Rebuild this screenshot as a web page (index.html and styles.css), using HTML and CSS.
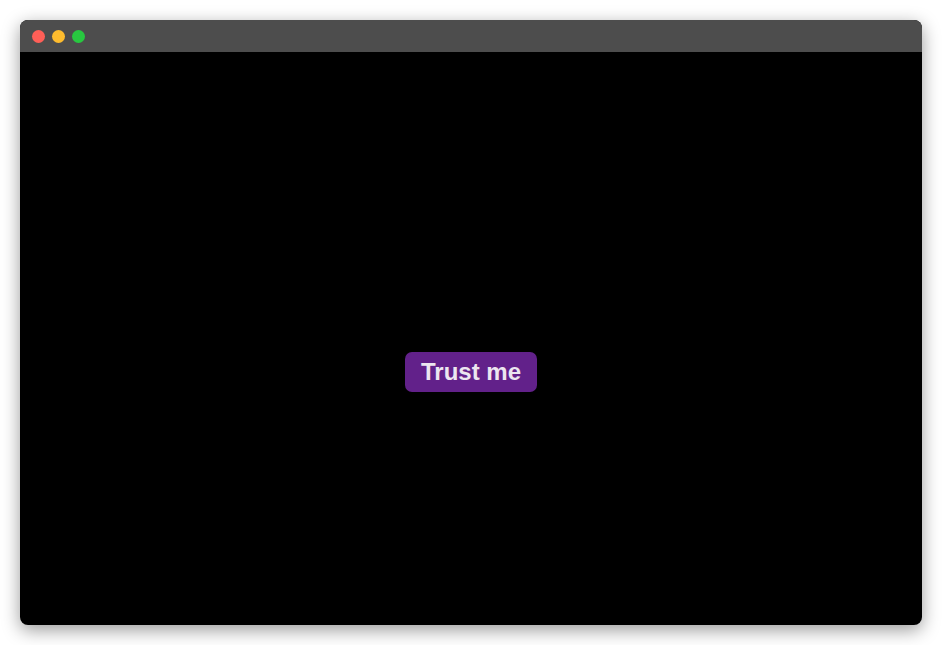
FILE: index.html
```html
<!DOCTYPE html>
<html>
<head>
<meta charset="utf-8">
<link rel="stylesheet" href="styles.css">
</head>
<body>
<div class="window">
  <div class="titlebar">
    <span class="dot red"></span>
    <span class="dot yellow"></span>
    <span class="dot green"></span>
  </div>
  <div class="content">
    <button class="trust">Trust me</button>
  </div>
</div>
</body>
</html>
```
FILE: styles.css
```css
html, body {
  margin: 0;
  padding: 0;
  background: #ffffff;
  width: 942px;
  height: 645px;
  overflow: hidden;
}
body {
  padding: 20px;
  box-sizing: border-box;
  font-family: "Liberation Sans", Arial, sans-serif;
}
.window {
  width: 902px;
  height: 605px;
  border-radius: 8px;
  overflow: hidden;
  background: #000;
  box-shadow: 0 5px 18px rgba(0,0,0,0.4);
  display: flex;
  flex-direction: column;
}
.titlebar {
  height: 32px;
  background: #4d4d4d;
  display: flex;
  align-items: center;
  gap: 7px;
  padding-left: 12px;
  flex-shrink: 0;
}
.dot {
  width: 13px;
  height: 13px;
  border-radius: 50%;
  display: block;
}
.red { background: #ff5f57; }
.yellow { background: #febc2e; }
.green { background: #28c840; }
.content {
  flex: 1;
  display: flex;
  justify-content: center;
  align-items: flex-start;
  padding-top: 300px;
}
.trust {
  width: 132px;
  height: 40px;
  border: none;
  border-radius: 7px;
  background: #62218a;
  color: #ece6f0;
  font-family: "Liberation Sans", Arial, sans-serif;
  font-weight: bold;
  font-size: 24px;
  padding: 0;
}
```
